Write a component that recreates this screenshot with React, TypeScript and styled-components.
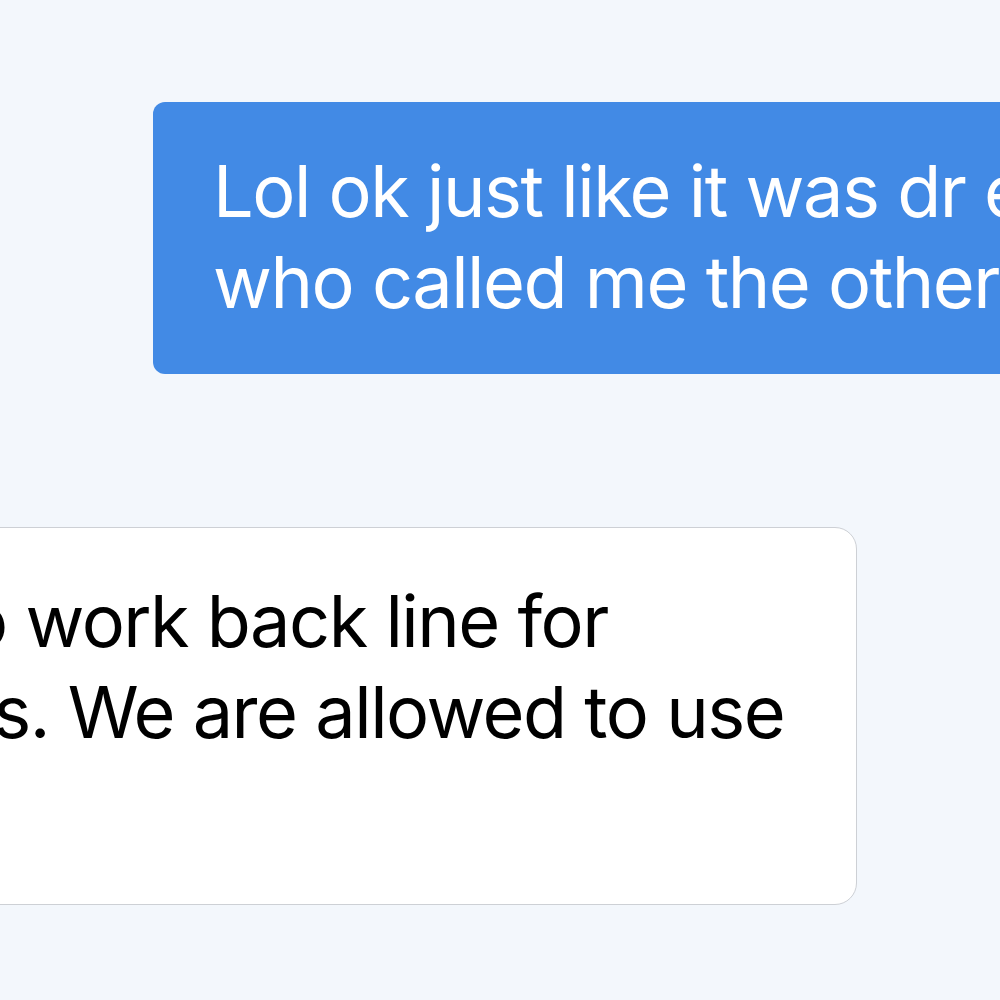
import React from "react";
import styled, { createGlobalStyle } from "styled-components";

const Global = createGlobalStyle`
  html, body {
    margin: 0;
    padding: 0;
    background: #f3f7fc;
    overflow: hidden;
  }
  body {
    width: 1000px;
    height: 1000px;
    font-family: Inter, "Noto Sans", "Liberation Sans", sans-serif;
  }
`;

const Thread = styled.div`
  display: flex;
  flex-direction: column;
  align-items: flex-start;
  gap: 153px;
  padding-top: 102px;
  width: 1000px;
  height: 1000px;
  overflow: hidden;
`;

const Bubble = styled.div<{ $mine?: boolean }>`
  box-sizing: border-box;
  font-size: 72px;
  line-height: 91px;
  letter-spacing: -1.5px;
  white-space: nowrap;
  flex-shrink: 0;
  ${(p) =>
    p.$mine
      ? `
    margin-left: 153px;
    width: 1300px;
    background: #428ae5;
    color: #ffffff;
    border-radius: 12px;
    padding: 43px 0 47px 60px;
  `
      : `
    margin-left: -418px;
    width: 1275px;
    background: #ffffff;
    color: #000000;
    border: 1.5px solid #cdd0d5;
    border-radius: 22px;
    padding: 47px 0 56px 60px;
  `}
`;

export default function App() {
  return (
    <>
      <Global />
      <Thread>
        <Bubble $mine>
          Lol ok just like it was dr evans
          <br />
          who called me the other day
        </Bubble>
        <Bubble>
          We have to work back line for
          <br />
          our patients. We are allowed to use
          <br />
          it.
        </Bubble>
      </Thread>
    </>
  );
}
